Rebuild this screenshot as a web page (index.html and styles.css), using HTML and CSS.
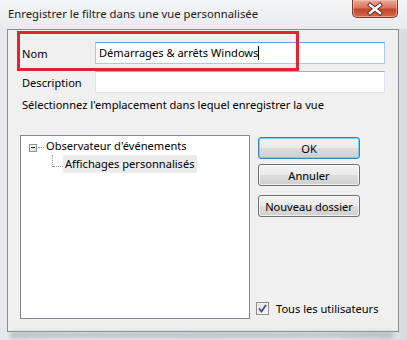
FILE: index.html
```html
<!DOCTYPE html>
<html lang="fr">
<head>
<meta charset="utf-8">
<link rel="stylesheet" href="styles.css">
</head>
<body>
<div class="frame">
  <div class="titlebar">
    <span class="title">Enregistrer le filtre dans une vue personnalisée</span>
    <div class="close">
      <svg width="46" height="18" viewBox="0 0 46 18">
        <path d="M18 5 L28 13 M28 5 L18 13" stroke="#5a2a22" stroke-width="4.2" stroke-linecap="square"/>
        <path d="M18 5 L28 13 M28 5 L18 13" stroke="#ffffff" stroke-width="2.4" stroke-linecap="square"/>
      </svg>
    </div>
  </div>
  <div class="client">
    <div class="highlight"></div>
    <div class="field">
      <label class="lbl">Nom</label>
      <div class="input focused">Démarrages &amp; arrêts Windows<span class="caret"></span></div>
    </div>
    <div class="field second">
      <label class="lbl">Description</label>
      <div class="input"></div>
    </div>
    <p class="hint">Sélectionnez l'emplacement dans lequel enregistrer la vue</p>
    <div class="main">
      <div class="tree">
        <div class="node root">
          <span class="expander"><span class="minus"></span></span>
          <span class="hdots"></span>
          <span class="ntext">Observateur d'événements</span>
        </div>
        <div class="node child">
          <span class="vdots"></span>
          <span class="hdots2"></span>
          <span class="ntext sel">Affichages personnalisés</span>
        </div>
      </div>
      <div class="side">
        <div class="buttons">
          <button class="btn default">OK</button>
          <button class="btn">Annuler</button>
          <button class="btn gapped">Nouveau dossier</button>
        </div>
        <label class="check">
          <span class="box">
            <svg width="9" height="9" viewBox="0 0 9 9"><path d="M1 4.5 L3.5 7.5 L8 1" fill="none" stroke="#3b4f86" stroke-width="1.8"/></svg>
          </span>
          <span>Tous les utilisateurs</span>
        </label>
      </div>
    </div>
  </div>
  <div class="shadow"></div>
</div>
</body>
</html>
```

FILE: styles.css
```css
* { box-sizing: border-box; }
html, body { margin: 0; padding: 0; }
body {
  width: 407px;
  height: 340px;
  overflow: hidden;
  font-family: "Noto Sans", "Open Sans", sans-serif;
  font-size: 11.1px;
  color: #000;
  background: linear-gradient(90deg, #e6e8eb 0%, #f3f4f6 20%, #eceef1 50%, #f4f5f7 80%, #d9dce0 100%);
}
.frame {
  width: 407px;
  height: 340px;
  display: flex;
  flex-direction: column;
}
.titlebar {
  height: 29px;
  display: flex;
  align-items: flex-start;
  padding-left: 8px;
  background: linear-gradient(180deg, #f4f5f6 0%, #e9ebee 100%);
}
.title {
  margin-top: 6px;
  font-size: 11.3px;
  color: #1a1a1a;
  line-height: 16px;
}
.close {
  margin-left: auto;
  margin-right: 9px;
  width: 46px;
  height: 18px;
  border: 1px solid #7a3a30;
  border-top: none;
  border-radius: 0 0 5px 5px;
  background: linear-gradient(180deg, #eaa896 0%, #d9775f 45%, #c4452c 55%, #d4694d 100%);
  box-shadow: inset 0 0 0 1px rgba(255,220,210,0.45);
  display: flex;
  align-items: center;
  justify-content: center;
  overflow: hidden;
}
.close svg { display: block; margin: -1px; }
.client {
  position: relative;
  margin: 0 8px 0 7px;
  height: 303px;
  border: 1px solid #8a8c90;
  background: #f0f0f0;
  padding: 12px 13px 0 12px;
  display: flex;
  flex-direction: column;
}
.highlight {
  position: absolute;
  left: 9px;
  top: 1px;
  width: 282px;
  height: 40px;
  border: 3px solid #e32430;
  pointer-events: none;
}
.field {
  display: flex;
  align-items: center;
  height: 22px;
  margin-bottom: 7px;
}
.field.second { margin-bottom: 4px; }
.lbl {
  width: 75px;
  padding-left: 2px;
}
.input {
  width: 290px;
  height: 22px;
  background: #fff;
  border: 1px solid #dfe3e8;
  border-top-color: #abadb3;
  padding: 0 3px;
  line-height: 20px;
  white-space: nowrap;
}
.input.focused {
  border-color: #a9c9e6;
  border-top-color: #6f9fcf;
}
.caret {
  display: inline-block;
  width: 1px;
  height: 14px;
  background: #000;
  vertical-align: -3px;
}
.hint {
  margin: 0 0 0 2px;
  height: 15px;
  line-height: 15px;
}
.main {
  display: flex;
  margin-top: 23px;
  height: 184px;
  gap: 8px;
}
.tree {
  width: 230px;
  height: 184px;
  background: #fff;
  border: 1px solid #828790;
  padding-top: 1px;
}
.node {
  display: flex;
  align-items: center;
  height: 18px;
  position: relative;
}
.root { padding-left: 8px; }
.expander {
  width: 8px;
  height: 8px;
  border: 1px solid #919191;
  background: linear-gradient(135deg, #ffffff, #e2e2e2);
  display: flex;
  align-items: center;
  justify-content: center;
  margin-top: 3px;
}
.minus { width: 4px; height: 1px; background: #1f1f1f; }
.hdots {
  width: 6px;
  border-top: 1px dotted #a0a0a0;
  margin-top: 2px;
  margin-left: 1px;
}
.ntext {
  line-height: 18px;
  height: 18px;
  padding: 0 2px;
}
.child { padding-left: 31px; }
.vdots {
  position: absolute;
  left: 31px;
  top: 0;
  height: 12px;
  border-left: 1px dotted #a0a0a0;
}
.hdots2 {
  width: 10px;
  border-top: 1px dotted #a0a0a0;
  margin-top: 5px;
  margin-left: 1px;
}
.sel { background: #ececec; }
.side {
  width: 104px;
  display: flex;
  flex-direction: column;
  justify-content: space-between;
  padding-top: 2px;
}
.buttons {
  display: flex;
  flex-direction: column;
  gap: 5px;
  width: 102px;
}
.btn {
  height: 22px;
  width: 102px;
  font-family: inherit;
  font-size: 11.1px;
  color: #000;
  border: 1px solid #707070;
  border-radius: 3px;
  background: linear-gradient(180deg, #f2f2f2 0%, #ebebeb 48%, #dddddd 52%, #cfcfcf 100%);
  box-shadow: inset 0 0 0 1px rgba(255,255,255,0.7);
  padding: 0;
}
.btn.default {
  border-color: #3c7fb1;
  box-shadow: inset 0 0 0 1px #7ed0f2;
}
.btn.gapped { margin-top: 4px; }
.check {
  display: flex;
  align-items: center;
  gap: 7px;
  white-space: nowrap;
  margin-bottom: 3px;
  margin-left: -2px;
}
.box {
  flex: none;
  width: 13px;
  height: 13px;
  border: 1px solid #8e8f8f;
  background: linear-gradient(135deg, #dcdcdc, #ffffff);
  display: flex;
  align-items: center;
  justify-content: center;
  box-shadow: inset 0 0 0 1px #f4f4f4;
}
.shadow {
  flex: 1;
  margin: 0 14px 0 10px;
  background: linear-gradient(180deg, #8f9398 0%, #d6d8db 100%);
  filter: blur(2px);
  opacity: 0.7;
}
```
